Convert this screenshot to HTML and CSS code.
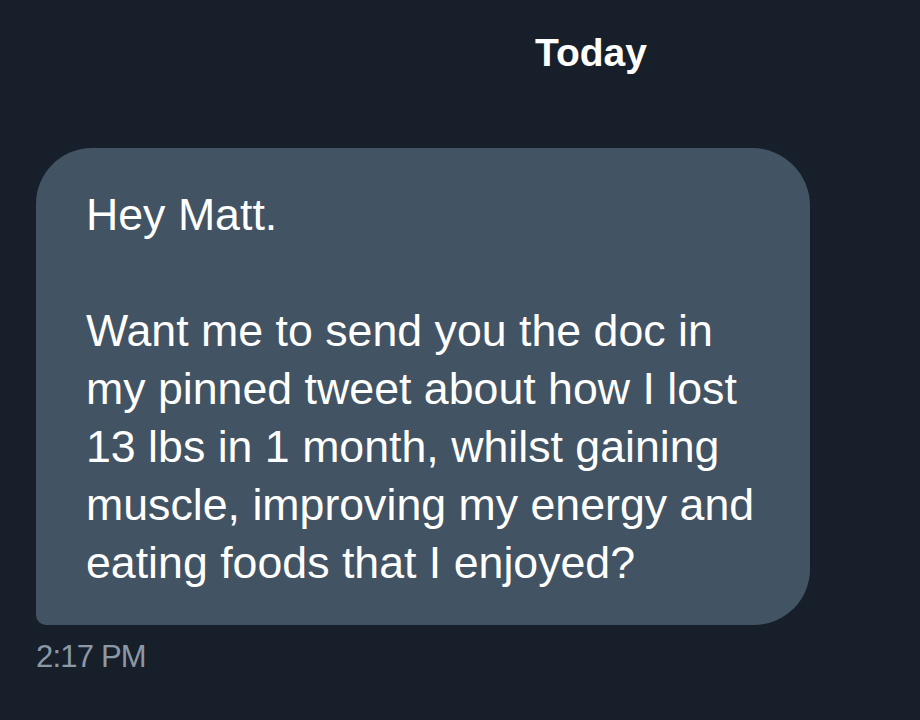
FILE: index.html
```html
<!DOCTYPE html>
<html lang="en">

<head>
    <meta charset="UTF-8">
    <meta name="viewport" content="width=device-width, initial-scale=1.0">
    <title>Messages</title>
    <link rel="stylesheet" href="styles.css">
</head>

<body>

    <div class="chat">
        <!-- Day divider -->
        <div class="day">Today</div>

        <!-- Incoming message -->
        <div class="message">
            <div class="bubble">
                <p>Hey Matt.</p>
                <p>Want me to send you the doc in<br>
                    my pinned tweet about how I lost<br>
                    13 lbs in 1 month, whilst gaining<br>
                    muscle, improving my energy and<br>
                    eating foods that I enjoyed?</p>
            </div>
            <div class="time">2:17 PM</div>
        </div>
    </div>

</body>

</html>
```

FILE: styles.css
```css
/* General Styles */
* {
    margin: 0;
    padding: 0;
    box-sizing: border-box;
}

body {
    font-family: 'Liberation Sans', Arial, sans-serif;
    background-color: #17202a;
    color: #fff;
    height: 100vh;
    overflow: hidden;
}

.chat {
    display: flex;
    flex-direction: column;
    padding: 28px 0 0 36px;
}

.day {
    padding-left: 499px;
    font-size: 39px;
    font-weight: bold;
    line-height: 50px;
}

.message {
    margin-top: 70px;
    display: flex;
    flex-direction: column;
}

.bubble {
    width: 774px;
    background-color: #425364;
    border-radius: 56px 58px 56px 10px;
    padding: 38px 20px 33px 50px;
    font-size: 44.7px;
    line-height: 58px;
}

.bubble p+p {
    margin-top: 58px;
}

.time {
    margin-top: 14px;
    font-size: 31px;
    color: #8b98a5;
    letter-spacing: -0.8px;
}
```
